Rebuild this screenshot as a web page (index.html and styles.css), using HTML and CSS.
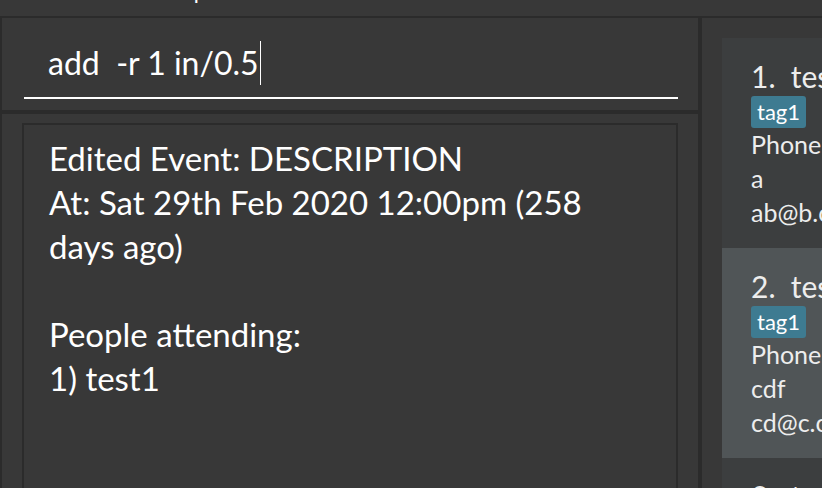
FILE: index.html
```html
<!DOCTYPE html>
<html>
<head>
<meta charset="utf-8">
<link rel="stylesheet" href="styles.css">
</head>
<body>
<div class="app">
  <div class="menubar">
    <div class="menu-items">
      <span class="menu-item">File</span>
      <span class="menu-item">Help</span>
    </div>
  </div>
  <div class="main">
    <div class="left">
      <div class="command-pane">
        <div class="command-field">
          <span class="command-text">add  -r 1 in/0.5</span><span class="caret"></span>
        </div>
      </div>
      <div class="result-pane">
        <div class="result-box">
          <div class="result-text">Edited Event: DESCRIPTION
At: Sat 29th Feb 2020 12:00pm (258
days ago)

People attending:
1) test1</div>
        </div>
      </div>
    </div>
    <div class="right">
      <div class="list">
        <div class="card even">
          <div class="card-title">1.&nbsp; test1</div>
          <div class="tags"><span class="tag">tag1</span></div>
          <div class="card-line">Phone: 123</div>
          <div class="card-line">a</div>
          <div class="card-line">ab@b.com</div>
        </div>
        <div class="card odd">
          <div class="card-title">2.&nbsp; test2</div>
          <div class="tags"><span class="tag">tag1</span></div>
          <div class="card-line">Phone: 456</div>
          <div class="card-line">cdf</div>
          <div class="card-line">cd@c.com</div>
        </div>
        <div class="card even">
          <div class="card-title">3.&nbsp; test3</div>
        </div>
      </div>
    </div>
  </div>
</div>
</body>
</html>
```
FILE: styles.css
```css
* { box-sizing: border-box; }
html, body {
  margin: 0;
  padding: 0;
  background: #383838;
  overflow: hidden;
}
body {
  font-family: "Lato", "Liberation Sans", sans-serif;
  color: #ffffff;
}
.app {
  width: 822px;
  height: 488px;
  display: flex;
  flex-direction: column;
  overflow: hidden;
}
.menubar {
  height: 18px;
  flex: none;
  border-bottom: 2px solid #2b2b2b;
  overflow: hidden;
  background: #383838;
}
.menu-items {
  display: flex;
  gap: 26px;
  padding-left: 100px;
  margin-top: -22px;
  font-size: 22px;
  line-height: 26px;
  color: #ffffff;
}
.main {
  flex: 1;
  display: flex;
  min-height: 0;
}
.left {
  width: 702px;
  flex: none;
  display: flex;
  flex-direction: column;
  border-left: 2px solid #2b2b2b;
  border-right: 4px solid #2b2b2b;
}
.command-pane {
  height: 96px;
  flex: none;
  padding: 23px 20px 0 22px;
  border-bottom: 4px solid #2b2b2b;
}
.command-field {
  height: 58px;
  border-bottom: 2px solid #ffffff;
  padding-left: 24px;
  display: flex;
  align-items: flex-start;
  font-size: 32px;
  line-height: 44px;
  white-space: pre;
}
.caret {
  width: 1px;
  height: 44px;
  margin-left: 1px;
  background: #ffffff;
}
.result-pane {
  flex: 1;
  min-height: 0;
  padding: 9px 20px 0 20px;
}
.result-box {
  height: 100%;
  border: 2px solid #2b2b2b;
  border-bottom: none;
  padding: 11px 24px 0 25px;
}
.result-text {
  white-space: pre-line;
  font-size: 33px;
  line-height: 44px;
  color: #ffffff;
}
.right {
  flex: 1;
  min-width: 0;
  padding: 20px 0 0 20px;
  overflow: hidden;
}
.list {
  width: 100%;
  overflow: hidden;
}
.card {
  height: 210px;
  padding: 20px 0 0 29px;
  white-space: nowrap;
  overflow: hidden;
  color: #ededed;
}
.card.even { background: #3c3e3f; }
.card.odd { background: #505557; }
.card-title {
  font-size: 30px;
  line-height: 36px;
  height: 38px;
}
.tags {
  display: flex;
  height: 31px;
}
.tag {
  display: inline-block;
  background: #3e7b91;
  color: #ffffff;
  font-size: 22px;
  line-height: 32px;
  height: 32px;
  padding: 0 6px 0 6px;
  border-radius: 3px;
}
.card-line {
  font-size: 25px;
  line-height: 34px;
  height: 34px;
}
```
